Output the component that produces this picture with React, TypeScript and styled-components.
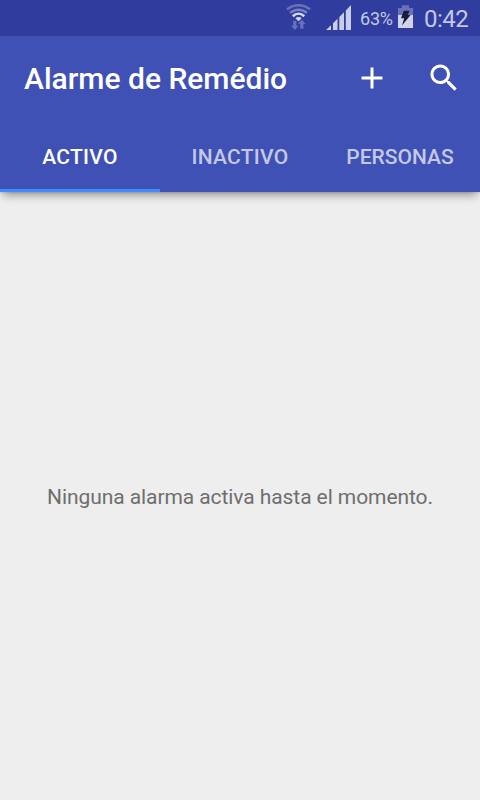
import React from 'react';
import styled, { createGlobalStyle } from 'styled-components';

const GlobalStyle = createGlobalStyle`
  *, *::before, *::after { box-sizing: border-box; }
  body { margin: 0; background: #eee; font-family: Roboto, sans-serif; }
`;

const Screen = styled.div`
  display: flex;
  flex-direction: column;
  width: 480px;
  height: 800px;
  overflow: hidden;
  background: #eee;
`;

const StatusBar = styled.div`
  display: flex;
  flex: none;
  align-items: center;
  justify-content: flex-end;
  height: 36px;
  padding-right: 12px;
  background: #303d9e;
  color: #c4c8e5;
`;

const WifiIcon = styled.svg`
  width: 26px;
  height: 36px;
  margin-right: 14px;
`;

const SignalIcon = styled.svg`
  width: 26px;
  height: 36px;
  margin-right: 8px;
`;

const BatteryIcon = styled.svg`
  width: 16px;
  height: 36px;
  margin: 0 10px 0 6px;
`;

const BatteryLevel = styled.span`
  width: 32px;
  padding-top: 2px;
  font-size: 18px;
  line-height: 22px;
  letter-spacing: -0.2px;
  white-space: nowrap;
`;

const Clock = styled.span`
  width: 44px;
  padding-top: 2px;
  font-size: 24px;
  line-height: 28px;
  letter-spacing: -0.5px;
  white-space: nowrap;
`;

const Header = styled.header`
  flex: none;
  background: #3f51b5;
  color: #fff;
  box-shadow: 0 6px 9px -3px rgba(0, 0, 0, 0.38), 0 1px 2px rgba(0, 0, 0, 0.1);
`;

const Toolbar = styled.div`
  display: flex;
  align-items: center;
  height: 84px;
  padding-left: 24px;
`;

const Title = styled.h1`
  flex: 1;
  margin: 0;
  padding-top: 1px;
  font-size: 30px;
  font-weight: 500;
  line-height: 36px;
  white-space: nowrap;
`;

const IconButton = styled.button`
  display: flex;
  align-items: center;
  justify-content: center;
  width: 72px;
  height: 72px;
  padding: 0;
  border: 0;
  background: none;
  color: inherit;
`;

const ActionIcon = styled.svg`
  width: 36px;
  height: 36px;
  fill: currentColor;
`;

const Tabs = styled.nav`
  display: grid;
  grid-template-columns: repeat(3, 1fr);
  height: 72px;
`;

const Tab = styled.button<{ $active?: boolean; $tracking: number }>`
  display: flex;
  align-items: center;
  justify-content: center;
  padding: 5px 0 0;
  border: 0;
  border-bottom: 3px solid ${(p) => (p.$active ? '#448aff' : 'transparent')};
  background: none;
  color: ${(p) => (p.$active ? '#fff' : 'rgba(255, 255, 255, 0.7)')};
  font-family: inherit;
  font-size: 21px;
  font-weight: 500;
  line-height: 25px;
  letter-spacing: ${(p) => p.$tracking}px;
`;

const Content = styled.main`
  display: flex;
  flex: 1;
  align-items: center;
  justify-content: center;
`;

const EmptyMessage = styled.p`
  margin: 0;
  padding-top: 3px;
  color: #6e6e6e;
  font-size: 21px;
  line-height: 25px;
  letter-spacing: -0.08px;
  white-space: nowrap;
`;

const tabs = [
  { label: 'ACTIVO', tracking: 0.25 },
  { label: 'INACTIVO', tracking: 0.25 },
  { label: 'PERSONAS', tracking: 0 },
];

export default function App() {
  return (
    <>
      <GlobalStyle />
      <Screen>
        <StatusBar>
          <WifiIcon viewBox="0 0 26 36" fill="none">
            <g stroke="#6972b8" strokeWidth="2.5">
              <path d="M1 9.4C7.5 3.7 17.5 3.7 24 9.4" />
              <path d="M4.1 12.9C9 8.6 16 8.6 20.9 12.9" stroke="#7780c0" />
            </g>
            <path d="M6.8 16.2C10.2 12.9 14.8 12.9 18.2 16.2" stroke="#d6d9ee" strokeWidth="2.6" />
            <path d="M9.4 18.3Q12.5 15.8 15.6 18.3L12.5 21.3Z" fill="#d6d9ee" />
            <g fill="#6972b8">
              <path d="M7.2 20.7h3.2v5h2.2L8.8 30 5 25.7h2.2z" />
              <path d="M14.2 28.7V24H12l3.8-4.3 3.8 4.3h-2.2v4.7z" />
            </g>
          </WifiIcon>
          <SignalIcon viewBox="0 0 26 36" fill="#c9cde8">
            <path d="M0 30L5 25.3V30zM7 30V23.2L11.5 18.8V30zM13.3 30V17L18 12.3V30zM19.8 30V10.5L25 5V30z" />
          </SignalIcon>
          <BatteryLevel>63%</BatteryLevel>
          <BatteryIcon viewBox="0 0 16 36">
            <path d="M0 8h4V5.3h7V8h4v7H0z" fill="#6972b8" />
            <path d="M0 15h15v13H0z" fill="#d0d4eb" />
            <path d="M5.8 10.8h5.8l-2 4.1h3L4 25.4l2.2-7.2H3z" fill="#171b3e" />
          </BatteryIcon>
          <Clock>0:42</Clock>
        </StatusBar>
        <Header>
          <Toolbar>
            <Title>Alarme de Remédio</Title>
            <IconButton aria-label="Añadir">
              <ActionIcon viewBox="0 0 24 24">
                <path d="M19 13h-6v6h-2v-6H5v-2h6V5h2v6h6v2z" />
              </ActionIcon>
            </IconButton>
            <IconButton aria-label="Buscar">
              <ActionIcon viewBox="0 0 24 24">
                <path d="M15.5 14h-.79l-.28-.27C15.41 12.59 16 11.11 16 9.5 16 5.91 13.09 3 9.5 3S3 5.91 3 9.5 5.91 16 9.5 16c1.61 0 3.09-.59 4.23-1.57l.27.28v.79l5 4.99L20.49 19l-4.99-5zm-6 0C7.01 14 5 11.99 5 9.5S7.01 5 9.5 5 14 7.01 14 9.5 11.99 14 9.5 14z" />
              </ActionIcon>
            </IconButton>
          </Toolbar>
          <Tabs>
            {tabs.map(({ label, tracking }, i) => (
              <Tab key={label} $active={i === 0} $tracking={tracking}>{label}</Tab>
            ))}
          </Tabs>
        </Header>
        <Content>
          <EmptyMessage>Ninguna alarma activa hasta el momento.</EmptyMessage>
        </Content>
      </Screen>
    </>
  );
}
